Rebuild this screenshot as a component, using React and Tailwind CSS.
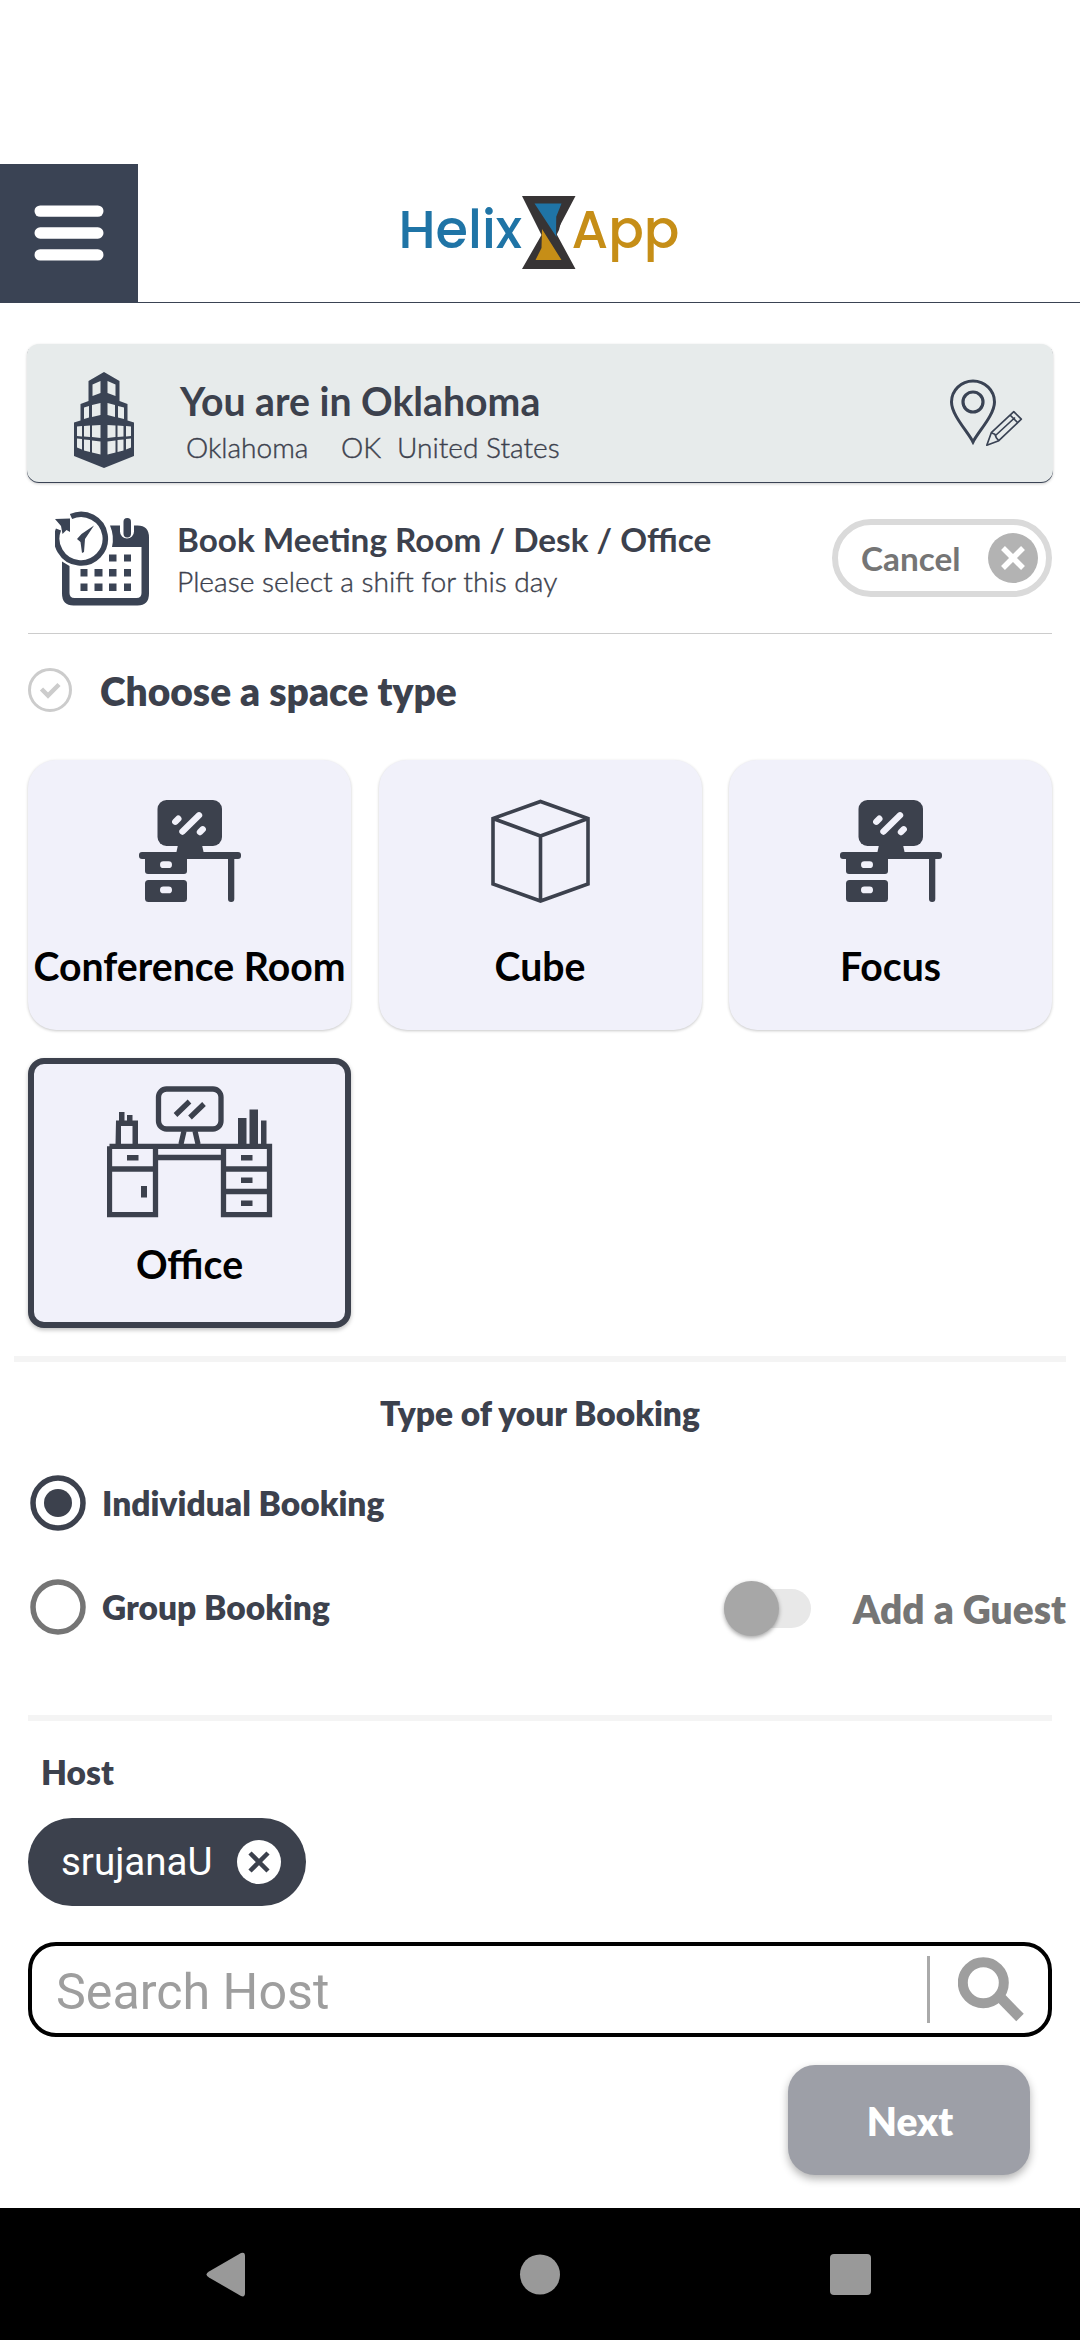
const INK = "#3c414d";
const NAVY = "#3a4354";

function MenuIcon() {
  return (
    <svg width="138" height="138" viewBox="0 0 138 138" fill="#fff">
      <rect x="34.5" y="41.400" width="69" height="11.400" rx="5.700" />
      <rect x="34.5" y="63.300" width="69" height="11.400" rx="5.700" />
      <rect x="34.5" y="85.200" width="69" height="11.400" rx="5.700" />
    </svg>
  );
}

function Logo() {
  return (
    <svg width="290" height="95" viewBox="395 185 290 95" fontFamily="Poppins, 'Open Sans', sans-serif" fontWeight="500">
      <text x="398.500" y="248" fontSize="53" textLength="123.500" lengthAdjust="spacingAndGlyphs" fill="#1f74a6">Helix</text>
      <path d="M522 196h53.500l-19.500 37 19.500 36h-53.500l19.500-34z" fill="#373435" />
      <path d="M534.500 203.500h27l-5 12.500v21z" fill="#1f74a6" />
      <path d="M556.500 216l-.5 20 3-6 2-8z" fill="#373435" />
      <path d="M542 229l19.500 31h-26l6-12z" fill="#c68e17" />
      <text x="571.500" y="248" fontSize="53" textLength="108" lengthAdjust="spacingAndGlyphs" fill="#c68e17">App</text>
    </svg>
  );
}

function BuildingIcon() {
  return (
    <svg width="60" height="96" viewBox="74 372 60 96">
      <path fill={NAVY} d="M104 372l15.500 9v20l8 3v16.500l6.500 2v33.500l-30 12-30-12v-33.500l6.500-2v-16.500l8-3v-20z" />
      <g fill="#e7ebeb">
        <path d="M92.500 384.500l8-3.500v12l-8 3zM107.500 381l8 3.500v11.500l-8-3z" />
        <path d="M84 407.500l5-1.500v11.500l-5 1.500zM92 405l8.500-2v12l-8.500 2zM107.500 403l7.500 2v12l-7.500-2zM118 406l6 1.500v11.500l-6-1.500z" />
        <path d="M77 426.500l5-.5v10.500l-5-.5zM84 426l6-.5v11.500l-6-.5zM92 425.500l8.500-.5v13l-8.500-1zM107.500 425l8 .5v11.500l-8 1zM117.500 425.500l6 .5v10.500l-6 .5zM126 426l5 .5v9.500l-5 .5z" />
        <path d="M77 438.500l5 .5v10.500l-5-2zM84 439.500l6 .5v12l-6-1.500zM92 440.500l8.500 1v13l-8.500-2zM107.500 441.500l8-1v12l-8 2zM117.500 440l6-.5v11l-6 1.500zM126 439l5-.5v9l-5 2z" />
      </g>
    </svg>
  );
}

function CalendarIcon() {
  return (
    <svg width="95" height="95" viewBox="55 511 95 95" fill={NAVY}>
      <path d="M62 561.500l7.500 4.500v27q0 5 5 5h62q5 0 5-5v-46h-29.500q2.500-11-2-21.500h10v6a7 7 0 0 0 14 0v-6h3.500q11.500 0 11.500 12v56q0 12-11.500 12h-64q-11.500 0-11.500-12z" />
      <rect x="123.500" y="518" width="7.500" height="19.500" rx="3.700" />
      <path d="M71 516.500a24.300 24.300 0 1 1-12.500 13" fill="none" stroke={NAVY} strokeWidth="5.500" />
      <path d="M55 519l15-.5v13.500l-3.500-2-4 4-1.500-8z" />
      <path d="M94 525.500l-9 13.500-1 13-2 1-1.500-11-3.500-3 4.500-5z" />
      <path d="M109 554.500h7.500v7h-7.500zM124 554.500h7v7h-7zM80.500 569h7v7.500h-7zM94.500 569h8v7.500h-8zM109 569h7.500v7.500h-7.500zM124 569h7v7.500h-7zM80.500 583.500h7v7.500h-7zM94.500 583.500h8v7.500h-8zM109 583.500h7.500v7.500h-7.500zM124 583.500h7v7.500h-7z" />
    </svg>
  );
}

function PinEditIcon() {
  return (
    <svg width="76" height="70" viewBox="948 378 76 70" fill="none" stroke={NAVY}>
      <path strokeWidth="3" d="M973 442c-5-10-21.500-27-21.500-40a21.500 21 0 0 1 43 0c0 13-16.500 30-21.500 40z" />
      <circle cx="973" cy="402" r="10" strokeWidth="3.200" />
      <g strokeWidth="1.700" strokeLinejoin="round">
        <path d="M986.800 445.200l4.500-12.500 22.500-21 7.500 7.500-22.500 21.500z" />
        <path d="M991.300 432.700l3.500 1.500 1.500 3.500 2.500 3M1010 415l7.500 7.500M995.500 435.500l19.500-18" />
      </g>
    </svg>
  );
}

function DeskIcon() {
  return (
    <svg width="102" height="102" viewBox="138 800 102 102" fill={INK}>
      <rect x="156.500" y="800" width="64.500" height="46" rx="9" />
      <path d="M177 845h24l2 9h-28z" />
      <rect x="138" y="852" width="102" height="7" rx="3" />
      <path d="M144 857h42v14q0 3-3 3h-36q-3 0-3-3z" />
      <rect x="144" y="880" width="42" height="22" rx="3.500" />
      <rect x="227" y="856" width="6.300" height="46" rx="3" />
      <g fill="#f1f1fa">
        <rect x="159" y="861.300" width="12" height="6.800" rx="3.400" />
        <rect x="159" y="886.500" width="12" height="6.800" rx="3.400" />
      </g>
      <path d="M174.300 821.700l3-3M181.500 831.500l16.500-16.200M199 832l2.700-2.700" stroke="#f1f1fa" strokeWidth="6.400" strokeLinecap="round" />
    </svg>
  );
}

function CubeIcon() {
  return (
    <svg width="99" height="104" viewBox="490.500 799 99 104" fill="none" stroke={INK} strokeWidth="3.600">
      <path d="M540 801.500l47.500 17v65.500l-47.500 17-47.500-17v-65.500zM492.500 818.500l47.500 17.500 47.500-17.500M540 836v65" />
    </svg>
  );
}

function OfficeIcon() {
  return (
    <svg width="166" height="132" viewBox="106.500 1086 166 132" fill={INK}>
      <g fill="none" stroke={INK} strokeWidth="5.300">
        <rect x="158" y="1089" width="62.500" height="40" rx="8" />
        <path d="M183.500 1131l-3 13M194.500 1131l3 13M109 1146.300h160v68.300h-46v-68.300M109 1146.300v68.300h46v-68.300M109 1169h46M223 1169h46M223 1191.500h46M155 1157.500h68" />
        <path d="M175 1115l14-13.500M189.500 1117.500l14-13.500" />
      </g>
      <path d="M115.500 1120.500h3v-8.500h5.500v8.500h2.500v-5.500h5.500v5.500h5.500v24h-5.500v-18.500h-11.500v18.500h-5.500z" />
      <path d="M237.500 1118h8.500v26h-8.500zM249 1109.500h8.500v34.500h-8.500zM260.500 1120.500h5.500v24h-5.500z" />
      <path d="M126.500 1155h11.500v5.500h-11.500zM140.500 1186h6v11.500h-6zM240.500 1155h11.500v5.500h-11.500zM240.500 1177.500h11.500v5.500h-11.500zM240.500 1200.500h11.500v5.500h-11.500z" />
    </svg>
  );
}

function SpaceCard({ label, selected, children }) {
  return (
    <div
      className={
        selected
          ? "flex h-[270px] flex-col items-center rounded-[16px] border-6 border-[#3c414d] bg-[#f1f1fa] pt-[22px] shadow-[0_2px_4px_rgba(0,0,0,0.25)]"
          : "flex h-[270px] flex-col items-center rounded-[28px] bg-[#f1f1fa] shadow-[0_1px_3px_rgba(0,0,0,0.22)]"
      }
    >
      <div className={selected ? "h-[154px]" : "flex h-[182px] items-center"}>{children}</div>
      <div className="text-[39.2px] leading-[48px] font-bold whitespace-nowrap text-black">{label}</div>
    </div>
  );
}

function Radio({ checked, label }) {
  return (
    <div className="flex h-[56px] items-center">
      <svg width="56" height="56" viewBox="0 0 56 56" fill="none">
        <circle cx="28" cy="28" r="25" stroke={checked ? INK : "#757575"} strokeWidth="5.500" />
        {checked && <circle cx="28" cy="28" r="14" fill={INK} />}
      </svg>
      <span className="ml-[16px] text-[33.5px] leading-[41px] font-extrabold text-[#3c414d]">{label}</span>
    </div>
  );
}

export default function App() {
  return (
    <div className="flex h-[2340px] w-[1080px] flex-col overflow-hidden bg-white font-['Lato',sans-serif] text-[#3c414d]">
      <header className="mt-[164px] flex h-[139px] shrink-0 border-b border-[#3a4354]">
        <div className="h-[138px] w-[138px] bg-[#3a4354]"><MenuIcon /></div>
        <div className="ml-[257px] pt-[21px]"><Logo /></div>
      </header>

      <section className="mx-[27px] mt-[41px] flex h-[139px] shrink-0 overflow-hidden rounded-[12px] bg-[#e7ebeb] shadow-[0_1px_3px_rgba(0,0,0,0.2),inset_0_-1px_0_#3a4354]">
        <div className="w-[153px] pt-[28px] pl-[47px]"><BuildingIcon /></div>
        <div className="flex-1 pt-[33px]">
          <div className="text-[39.2px] leading-[48px] font-bold">You are in Oklahoma</div>
          <div className="mt-[5px] flex pl-[6px] text-[28.1px] leading-[34px] font-light whitespace-nowrap [-webkit-text-stroke:0.4px_#3c414d]">
            <span className="w-[155px]">Oklahoma</span>
            <span className="w-[56px]">OK</span>
            <span>United States</span>
          </div>
        </div>
        <div className="mr-[29px] pt-[34px]"><PinEditIcon /></div>
      </section>

      <section className="mx-[28px] flex h-[151px] shrink-0 border-b border-[#cccccc]">
        <div className="w-[149px] pt-[28px] pl-[27px]"><CalendarIcon /></div>
        <div className="flex-1 pt-[36px] whitespace-nowrap">
          <div className="text-[33.3px] leading-[40px] font-bold">Book Meeting Room / Desk / Office</div>
          <div className="mt-[5px] text-[28.2px] leading-[34px] font-light [-webkit-text-stroke:0.4px_#3c414d]">Please select a shift for this day</div>
        </div>
        <div className="mt-[36px] flex h-[78px] w-[220px] items-center justify-between rounded-full border-6 border-[#dadada] pr-[8px] pl-[23px]">
          <span className="text-[33.3px] leading-[40px] font-bold text-[#757575]">Cancel</span>
          <svg width="50" height="50" viewBox="0 0 50 50">
            <circle cx="25" cy="25" r="25" fill="#b3b3b3" />
            <path d="M15 15l20 20M35 15l-20 20" stroke="#fff" strokeWidth="5.500" />
          </svg>
        </div>
      </section>

      <div className="ml-[28px] flex h-[126px] shrink-0">
        <svg className="mt-[34px]" width="44" height="44" viewBox="0 0 44 44" fill="none" stroke="#cccccc">
          <circle cx="22" cy="22" r="20.500" strokeWidth="3" />
          <path d="M13.500 21l6.500 6.500 11-11" strokeWidth="4.500" />
        </svg>
        <h2 className="mt-[33px] ml-[28px] text-[38.9px] leading-[48px] font-extrabold">Choose a space type</h2>
      </div>

      <div className="mx-[28px] grid shrink-0 grid-cols-3 gap-x-[27.5px] gap-y-[28px]">
        <SpaceCard label="Conference Room"><DeskIcon /></SpaceCard>
        <SpaceCard label="Cube"><CubeIcon /></SpaceCard>
        <SpaceCard label="Focus"><DeskIcon /></SpaceCard>
        <SpaceCard label="Office" selected><OfficeIcon /></SpaceCard>
      </div>

      <div className="mx-[14px] mt-[28px] h-[6px] shrink-0 bg-[#f4f4f4]" />
      <h3 className="mt-[31px] text-center text-[33.5px] leading-[41px] font-extrabold">Type of your Booking</h3>
      <div className="mt-[41px] ml-[30px]"><Radio checked label="Individual Booking" /></div>
      <div className="mt-[48px] mr-[14px] ml-[30px] flex h-[56px] items-center justify-between">
        <Radio label="Group Booking" />
        <div className="flex items-center pt-[2px]">
          <div className="mr-[42px] flex h-[39px] w-[87px] items-center rounded-full bg-[#e8e8e8]">
            <div className="h-[55px] w-[55px] shrink-0 rounded-full bg-[#a7a7a7] shadow-[0_2px_4px_rgba(0,0,0,0.35)]" />
          </div>
          <span className="pt-[2px] text-[38.9px] leading-[48px] font-extrabold whitespace-nowrap text-[#757575]">Add a Guest</span>
        </div>
      </div>
      <div className="mx-[28px] mt-[80px] h-[6px] shrink-0 bg-[#f4f4f4]" />

      <div className="mt-[31px] ml-[41px] text-[33.5px] leading-[41px] font-extrabold">Host</div>
      <div className="mt-[25px] ml-[28px] flex h-[88px] w-[278px] shrink-0 items-center justify-between rounded-full bg-[#3c414d] pr-[25px] pl-[33px]">
        <span className="font-['Roboto',sans-serif] text-[38.5px] leading-[48px] text-white">srujanaU</span>
        <svg width="44" height="44" viewBox="0 0 44 44">
          <circle cx="22" cy="22" r="22" fill="#fff" />
          <path d="M13 13l18 18M31 13l-18 18" stroke={INK} strokeWidth="4.500" />
        </svg>
      </div>

      <div className="mx-[28px] mt-[36px] flex h-[95px] shrink-0 items-center rounded-[28px] border-4 border-black pl-[24px]">
        <span className="flex-1 pt-[4px] font-['Roboto',sans-serif] text-[50.2px] leading-[58px] text-[#9e9e9e]">Search Host</span>
        <div className="h-[67px] w-[3px] bg-[#aaaaaa]" />
        <svg className="mr-[24px] ml-[28px]" width="66" height="65" viewBox="958 1957 66 65" fill="none" stroke="#9e9e9e">
          <circle cx="983.300" cy="1982.700" r="20.500" strokeWidth="10" />
          <path d="M1000 1997l20 20.500" strokeWidth="10.500" />
        </svg>
      </div>

      <button className="mt-[28px] mr-[50px] h-[110px] w-[242px] shrink-0 self-end rounded-[27px] bg-[#9d9fa7] pt-[2px] pl-[2px] text-[38.9px] leading-[48px] font-extrabold text-white shadow-[0_4px_8px_rgba(0,0,0,0.3)]">
        Next
      </button>

      <nav className="mt-auto flex h-[132px] shrink-0 bg-black">
        <svg width="1080" height="132" viewBox="0 2208 1080 132" fill="#999999">
          <path d="M209 2271.500l32-18.500q4-1.500 4 3v37q0 4.500-4 3l-32-18.500q-5-3 0-6z" />
          <circle cx="540" cy="2274.500" r="20" />
          <rect x="830" y="2254" width="41" height="41" rx="4" />
        </svg>
      </nav>
    </div>
  );
}
